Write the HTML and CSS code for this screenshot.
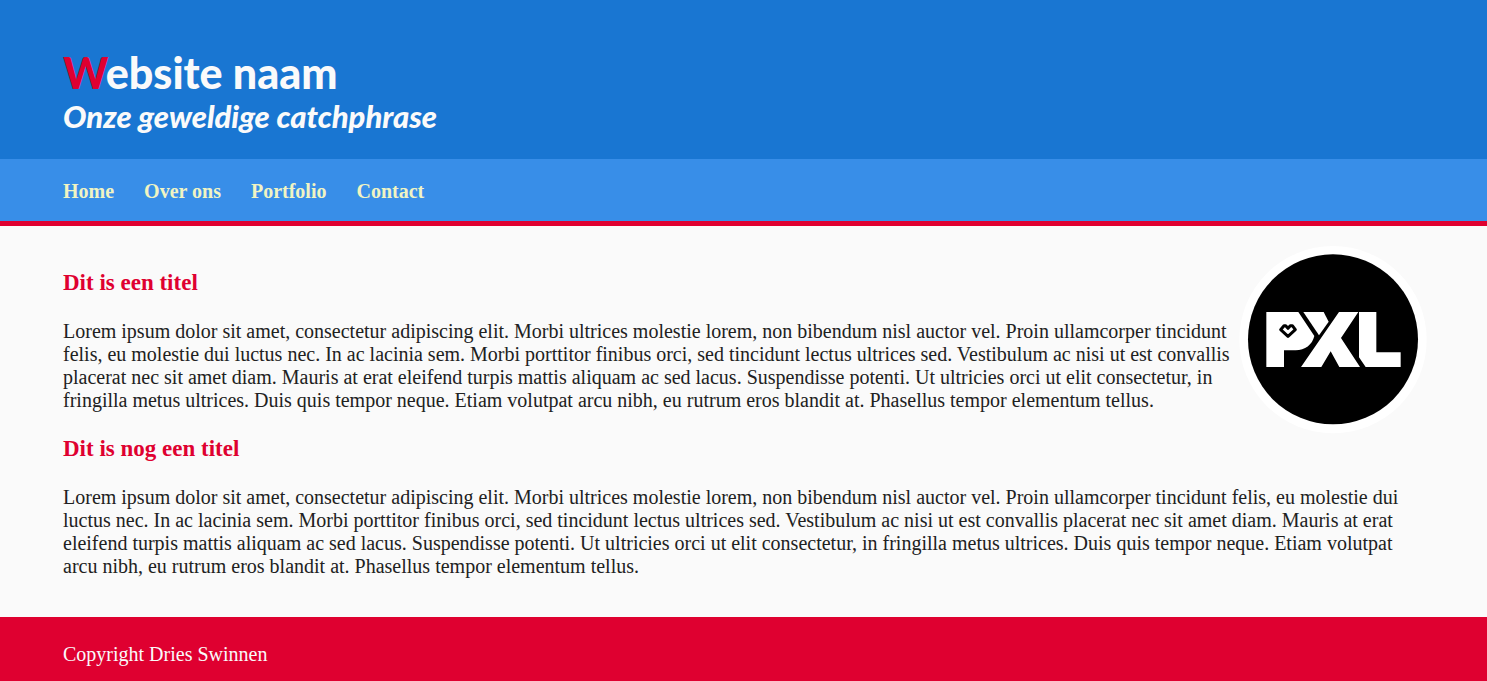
FILE: index.html
```html
<!DOCTYPE html>
<html lang="nl">
<head>
<meta charset="utf-8">
<title>Website naam</title>
<link rel="stylesheet" href="styles.css">
</head>
<body>
<header class="site-header">
  <h1 class="site-name">Website naam</h1>
  <p class="tagline">Onze geweldige catchphrase</p>
</header>
<nav class="site-nav">
  <ul class="nav-list">
    <li><a class="nav-link" href="#">Home</a></li>
    <li><a class="nav-link" href="#">Over ons</a></li>
    <li><a class="nav-link" href="#">Portfolio</a></li>
    <li><a class="nav-link" href="#">Contact</a></li>
  </ul>
</nav>
<main class="content">
  <svg class="logo" viewBox="28 30 564 564" role="img" aria-label="PXL">
    <circle cx="310" cy="311" r="281" fill="#fff"/>
    <circle cx="310" cy="310" r="255" fill="#000"/>
    <g fill="#fff">
      <path d="M110 228H206L254 300C248 326 226 343 198 343H163V393H110Z"/>
      <path d="M221 228H282L297 257L268 298Z"/>
      <path d="M328 228H386L334 306L391 393H329L303 346L275 393H214Z"/>
      <path d="M388 228H440V349H513V393H408L388 364Z"/>
    </g>
    <path d="M175 301L153 281L163 269H168L175 277L182 269H188L197 281Z" fill="none" stroke="#000" stroke-width="9" stroke-linejoin="round"/>
  </svg>
  <h2 class="title">Dit is een titel</h2>
  <p class="text">Lorem ipsum dolor sit amet, consectetur adipiscing elit. Morbi ultrices molestie lorem, non bibendum nisl auctor vel. Proin ullamcorper tincidunt felis, eu molestie dui luctus nec. In ac lacinia sem. Morbi porttitor finibus orci, sed tincidunt lectus ultrices sed. Vestibulum ac nisi ut est convallis placerat nec sit amet diam. Mauris at erat eleifend turpis mattis aliquam ac sed lacus. Suspendisse potenti. Ut ultricies orci ut elit consectetur, in fringilla metus ultrices. Duis quis tempor neque. Etiam volutpat arcu nibh, eu rutrum eros blandit at. Phasellus tempor elementum tellus.</p>
  <h2 class="title">Dit is nog een titel</h2>
  <p class="text">Lorem ipsum dolor sit amet, consectetur adipiscing elit. Morbi ultrices molestie lorem, non bibendum nisl auctor vel. Proin ullamcorper tincidunt felis, eu molestie dui luctus nec. In ac lacinia sem. Morbi porttitor finibus orci, sed tincidunt lectus ultrices sed. Vestibulum ac nisi ut est convallis placerat nec sit amet diam. Mauris at erat eleifend turpis mattis aliquam ac sed lacus. Suspendisse potenti. Ut ultricies orci ut elit consectetur, in fringilla metus ultrices. Duis quis tempor neque. Etiam volutpat arcu nibh, eu rutrum eros blandit at. Phasellus tempor elementum tellus.</p>
</main>
<footer class="site-footer">
  <p class="copyright">Copyright Dries Swinnen</p>
</footer>
</body>
</html>
```
FILE: styles.css
```css
body {
  margin: 0;
  background: #fafafa;
  color: #212121;
  font-family: "Liberation Serif", "Times New Roman", serif;
  font-size: 20px;
  line-height: 23px;
}

.site-header {
  padding: 48px 63px 24px;
  background: #1976d2;
  color: #fafafa;
  font-family: "Gill Sans", "Gill Sans MT", Lato, sans-serif;
}

.site-name {
  margin: 0;
  font-size: 43px;
  font-weight: 900;
  line-height: 50px;
}

.site-name::first-letter {
  color: #df0030;
}

.tagline {
  margin: 0;
  font-size: 31px;
  font-style: italic;
  font-weight: 900;
  line-height: 37px;
}

.site-nav {
  padding: 21px 63px 18px;
  border-bottom: 5px solid #df0030;
  background: #388ee8;
}

.nav-list {
  display: flex;
  flex-wrap: wrap;
  gap: 30px;
  margin: 0;
  padding: 0;
  list-style: none;
}

.nav-link {
  color: #f0f4c3;
  font-weight: bold;
  text-decoration: none;
}

.content {
  padding: 20px 60px 39px 63px;
}

.logo {
  float: right;
  width: 188px;
  height: 188px;
  margin-left: 8px;
}

.title {
  margin: 0;
  padding: 24px 0 25px;
  color: #df0030;
  font-size: 23px;
  line-height: 25px;
}

.text {
  margin: 0;
}

.site-footer {
  padding: 26px 63px 15px;
  background: #df0030;
  color: #fafafa;
}

.copyright {
  margin: 0;
}
```
